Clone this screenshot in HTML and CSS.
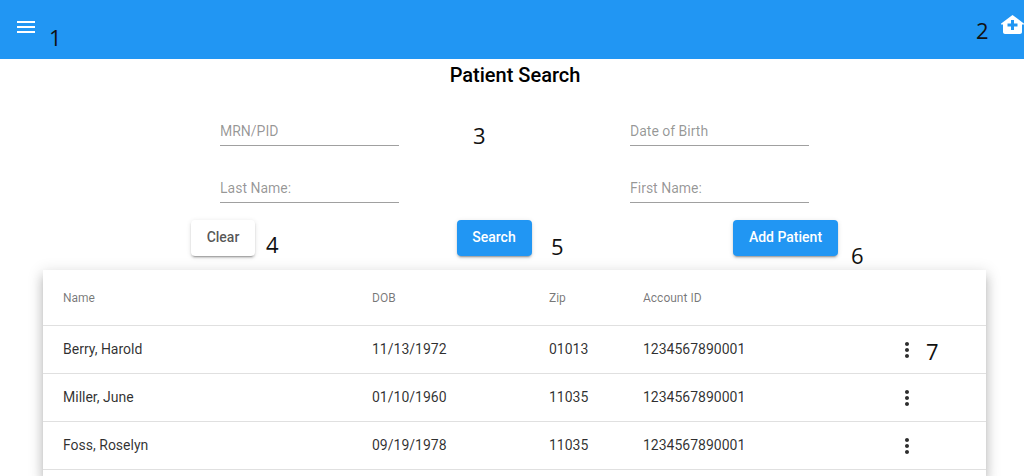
FILE: index.html
```html
<!DOCTYPE html>
<html lang="en">
<head>
    <meta charset="utf-8" />
    <title>Patient Search</title>
    <link rel="stylesheet" href="styles.css">
</head>
<body>
    <header class="toolbar">
        <button class="icon-btn" type="button" aria-label="Menu">
            <svg class="icon" viewBox="0 0 24 24"><path d="M3 18h18v-2H3v2zm0-5h18v-2H3v2zm0-7v2h18V6H3z"/></svg>
        </button>
        <button class="icon-btn" type="button" aria-label="Home">
            <svg class="home-icon" viewBox="0 0 23 19"><path fill-rule="evenodd" d="M11.500 0 22.800 8.400c.5.400.2 1.100-.4 1.100H21v7.500c0 1.100-.9 2-2 2H4c-1.100 0-2-.9-2-2V9.500H.6c-.6 0-.9-.7-.4-1.100L11.500 0zM10 5v3.500H6.500v3H10V15h3v-3.500h3.500v-3H13V5h-3z"/></svg>
        </button>
    </header>

    <main>
        <h1 class="page-title">Patient Search</h1>

        <form class="search-form">
            <input class="field" type="text" placeholder="MRN/PID">
            <input class="field" type="text" placeholder="Date of Birth">
            <input class="field" type="text" placeholder="Last Name:">
            <input class="field" type="text" placeholder="First Name:">
        </form>

        <div class="actions">
            <button class="btn btn-plain" type="button">Clear</button>
            <button class="btn btn-primary" type="button">Search</button>
            <button class="btn btn-primary" type="button">Add Patient</button>
        </div>

        <div class="card">
            <table class="patients">
                <thead>
                    <tr>
                        <th class="col-name">Name</th>
                        <th class="col-dob">DOB</th>
                        <th class="col-zip">Zip</th>
                        <th class="col-account">Account ID</th>
                        <th></th>
                    </tr>
                </thead>
                <tbody>
                    <tr>
                        <td>Berry, Harold</td>
                        <td>11/13/1972</td>
                        <td>01013</td>
                        <td>1234567890001</td>
                        <td class="more"><svg class="icon" viewBox="0 0 24 24"><path d="M12 8c1.100 0 2-.9 2-2s-.9-2-2-2-2 .9-2 2 .9 2 2 2zm0 2c-1.100 0-2 .9-2 2s.9 2 2 2 2-.9 2-2-.9-2-2-2zm0 6c-1.100 0-2 .9-2 2s.9 2 2 2 2-.9 2-2-.9-2-2-2z"/></svg></td>
                    </tr>
                    <tr>
                        <td>Miller, June</td>
                        <td>01/10/1960</td>
                        <td>11035</td>
                        <td>1234567890001</td>
                        <td class="more"><svg class="icon" viewBox="0 0 24 24"><path d="M12 8c1.100 0 2-.9 2-2s-.9-2-2-2-2 .9-2 2 .9 2 2 2zm0 2c-1.100 0-2 .9-2 2s.9 2 2 2 2-.9 2-2-.9-2-2-2zm0 6c-1.100 0-2 .9-2 2s.9 2 2 2 2-.9 2-2-.9-2-2-2z"/></svg></td>
                    </tr>
                    <tr>
                        <td>Foss, Roselyn</td>
                        <td>09/19/1978</td>
                        <td>11035</td>
                        <td>1234567890001</td>
                        <td class="more"><svg class="icon" viewBox="0 0 24 24"><path d="M12 8c1.100 0 2-.9 2-2s-.9-2-2-2-2 .9-2 2 .9 2 2 2zm0 2c-1.100 0-2 .9-2 2s.9 2 2 2 2-.9 2-2-.9-2-2-2zm0 6c-1.100 0-2 .9-2 2s.9 2 2 2 2-.9 2-2-.9-2-2-2z"/></svg></td>
                    </tr>
                </tbody>
            </table>
            <div class="card-rest"></div>
        </div>
    </main>

    <!-- callout numbers written over the screen -->
    <span class="callout callout-1">1</span>
    <span class="callout callout-2">2</span>
    <span class="callout callout-3">3</span>
    <span class="callout callout-4">4</span>
    <span class="callout callout-5">5</span>
    <span class="callout callout-6">6</span>
    <span class="callout callout-7">7</span>
</body>
</html>
```

FILE: styles.css
```css
:root {
    --primary-color: #2196f3;
    --font-family: Roboto, sans-serif;
    --text-color: rgba(0, 0, 0, 0.82);
    --muted-color: rgba(0, 0, 0, 0.54);
    --line-color: #e0e0e0;
}

html, body {
    height: 100%;
}

body {
    margin: 0;
    font-family: var(--font-family);
    background-color: #fff;
    color: var(--text-color);
    overflow: hidden;
}

.toolbar {
    height: 59px;
    background-color: var(--primary-color);
    display: flex;
    justify-content: space-between;
    align-items: flex-start;
    padding-left: 14px;
    box-sizing: border-box;
}

.icon-btn {
    padding: 0;
    margin-top: 15px;
    border: none;
    background: none;
    color: #fff;
    line-height: 0;
}

.icon {
    width: 24px;
    height: 24px;
    fill: currentColor;
}

.home-icon {
    display: block;
    width: 23px;
    height: 19px;
    fill: currentColor;
}

.page-title {
    margin: 5px 0 0;
    padding-left: 6px;
    height: 22px;
    line-height: 22px;
    font-size: 20px;
    font-weight: 500;
    text-align: center;
    color: #000;
}

.search-form {
    display: grid;
    grid-template-columns: 179px 179px;
    column-gap: 231px;
    row-gap: 25px;
    margin-top: 28px;
    padding-left: 220px;
}

.field {
    width: 100%;
    box-sizing: border-box;
    height: 32px;
    padding: 2px 0 0;
    border: none;
    border-bottom: 1px solid #a0a0a0;
    outline: none;
    background: none;
    font-family: var(--font-family);
    font-size: 14px;
}

.field::placeholder {
    color: rgba(0, 0, 0, 0.42);
    opacity: 1;
}

.actions {
    display: grid;
    grid-template-columns: 64px 75px 105px;
    column-gap: 201.5px;
    margin-top: 17px;
    padding-left: 191px;
}

.btn {
    height: 36px;
    padding: 0 0 2px;
    border: none;
    border-radius: 4px;
    font-family: var(--font-family);
    font-size: 14px;
    font-weight: 500;
    box-shadow: 0 3px 1px -2px rgba(0, 0, 0, 0.2), 0 2px 2px 0 rgba(0, 0, 0, 0.14), 0 1px 5px 0 rgba(0, 0, 0, 0.12);
}

.btn-plain {
    background-color: #fff;
    color: rgba(0, 0, 0, 0.68);
}

.btn-primary {
    background-color: var(--primary-color);
    color: #fff;
}

.card {
    margin: 14px 38px 0 43px;
    background-color: #fff;
    box-shadow: 0 5px 5px -3px rgba(0, 0, 0, 0.2), 0 8px 10px 1px rgba(0, 0, 0, 0.14), 0 3px 14px 2px rgba(0, 0, 0, 0.12);
}

.patients {
    width: 100%;
    border-collapse: collapse;
    table-layout: fixed;
}

.patients th {
    height: 55px;
    padding: 0;
    font-size: 12px;
    font-weight: 400;
    text-align: left;
    color: var(--muted-color);
    border-bottom: 1px solid var(--line-color);
}

.patients td {
    height: 45px;
    padding: 0 0 2px;
    font-size: 14px;
    border-bottom: 1px solid var(--line-color);
}

.patients th:first-child,
.patients td:first-child {
    padding-left: 20px;
}

.col-name {
    width: 309px;
}

.col-dob {
    width: 177px;
}

.col-zip {
    width: 94px;
}

.col-account {
    width: 245px;
}

.patients .more {
    padding: 0 0 0 7px;
    line-height: 0;
}

/* the rest of the table is below the fold */
.card-rest {
    height: 6px;
}

.callout {
    position: absolute;
    font-family: "Open Sans", sans-serif;
    font-size: 22px;
    line-height: 30px;
    color: #111;
}

.callout-1 { left: 49px; top: 22px; }
.callout-2 { left: 976px; top: 15px; }
.callout-3 { left: 473px; top: 120px; }
.callout-4 { left: 266px; top: 229px; }
.callout-5 { left: 551px; top: 231px; }
.callout-6 { left: 851px; top: 240px; }
.callout-7 { left: 926px; top: 336px; }
```
